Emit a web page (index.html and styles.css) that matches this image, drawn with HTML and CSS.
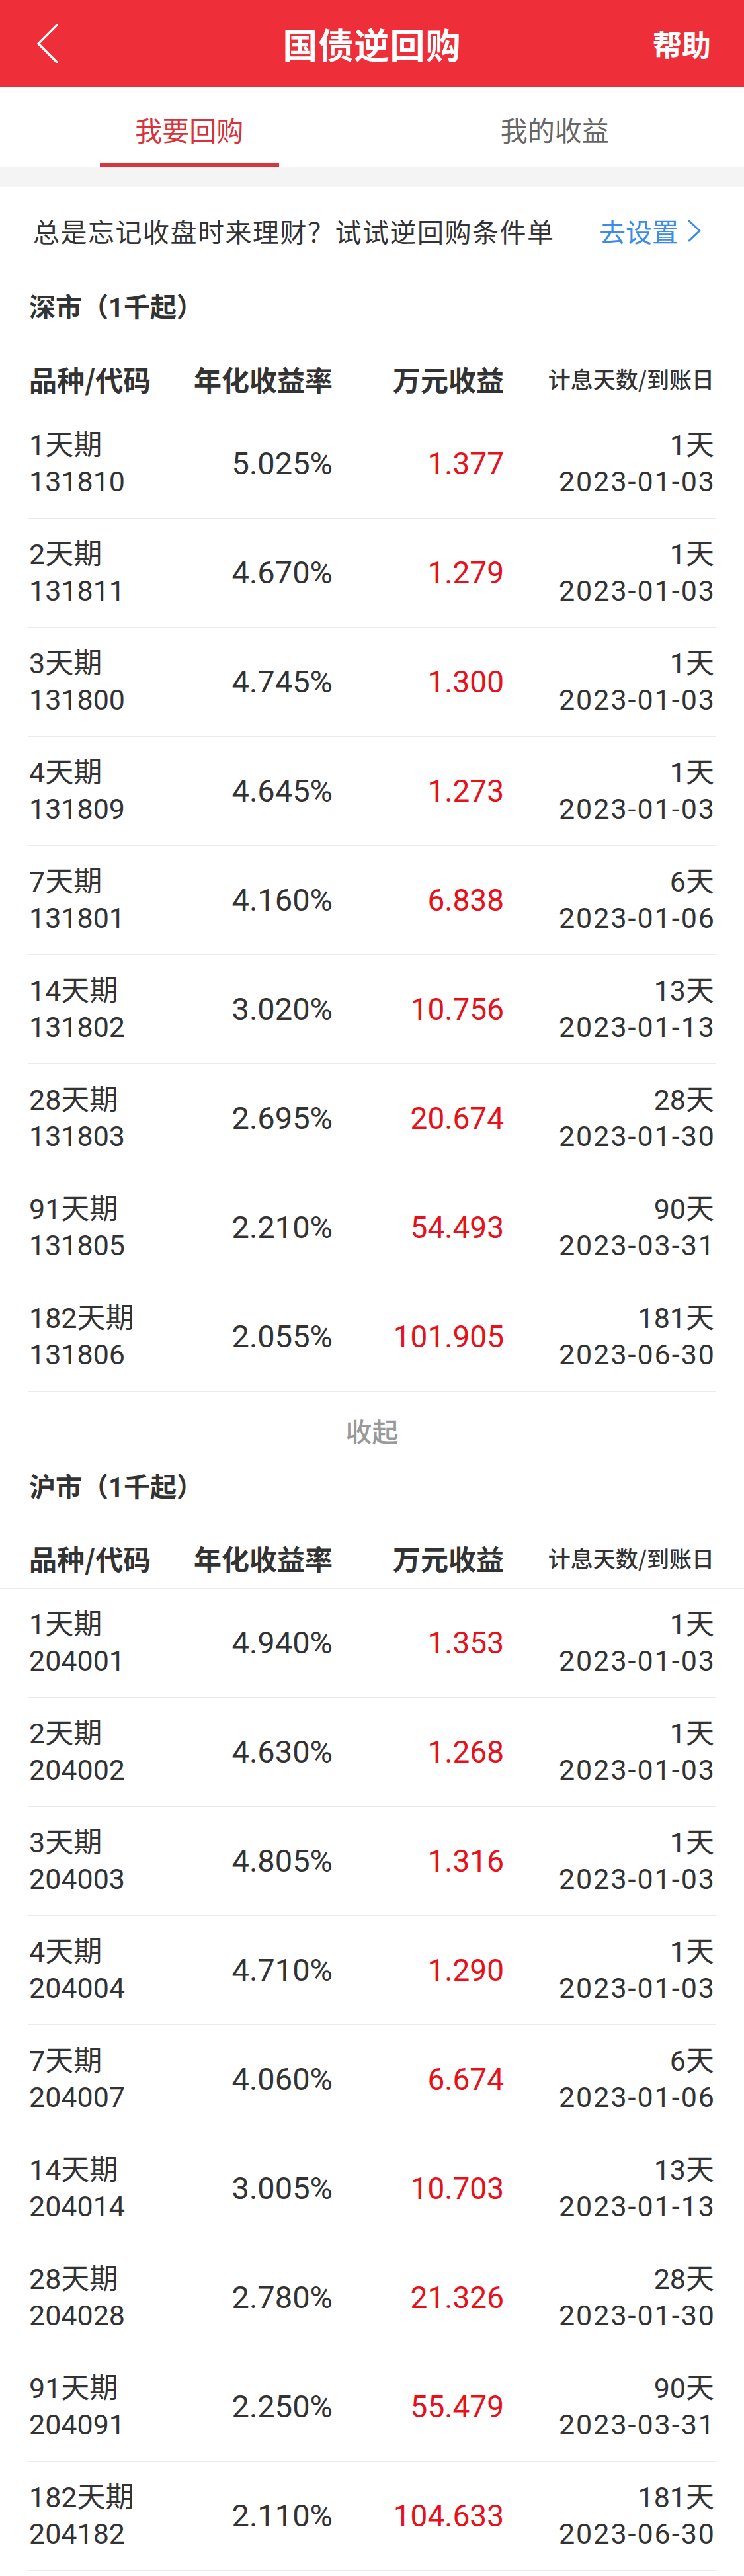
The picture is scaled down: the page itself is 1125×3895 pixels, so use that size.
FILE: index.html
```html
<!DOCTYPE html>
<html lang="zh-CN">
<head>
<meta charset="utf-8">
<title>国债逆回购</title>
<link rel="stylesheet" href="styles.css">
</head>
<body>
<header class="topbar">
  <div class="topbar-left">
    <svg class="back" width="34" height="60" viewBox="0 0 34 60"><polyline points="31,2 3,30 31,58" fill="none" stroke="#fff" stroke-width="3.5" stroke-linecap="round" stroke-linejoin="round"/></svg>
  </div>
  <div class="topbar-title">国债逆回购</div>
  <div class="topbar-right">帮助</div>
</header>

<nav class="tabs">
  <div class="tab active"><span>我要回购</span><i class="tab-line"></i></div>
  <div class="tab"><span>我的收益</span></div>
</nav>
<div class="gap"></div>

<div class="banner">
  <span class="banner-text">总是忘记收盘时来理财？试试逆回购条件单</span>
  <span class="banner-link">去设置<svg class="chev" width="24" height="36" viewBox="0 0 24 36"><polyline points="4,3 20,18 4,33" fill="none" stroke="#3c8ce7" stroke-width="3" stroke-linecap="round" stroke-linejoin="round"/></svg></span>
</div>

<section>
  <h2 class="market">深市（1千起）</h2>
  <div class="thead">
    <div>品种/代码</div><div class="r">年化收益率</div><div class="r">万元收益</div><div class="r small">计息天数/到账日</div>
  </div>
  <div class="row"><div class="c1"><b>1天期</b><i>131810</i></div><div class="rate">5.025%</div><div class="earn">1.377</div><div class="c4"><b>1天</b><i>2023-01-03</i></div></div>
  <div class="row"><div class="c1"><b>2天期</b><i>131811</i></div><div class="rate">4.670%</div><div class="earn">1.279</div><div class="c4"><b>1天</b><i>2023-01-03</i></div></div>
  <div class="row"><div class="c1"><b>3天期</b><i>131800</i></div><div class="rate">4.745%</div><div class="earn">1.300</div><div class="c4"><b>1天</b><i>2023-01-03</i></div></div>
  <div class="row"><div class="c1"><b>4天期</b><i>131809</i></div><div class="rate">4.645%</div><div class="earn">1.273</div><div class="c4"><b>1天</b><i>2023-01-03</i></div></div>
  <div class="row"><div class="c1"><b>7天期</b><i>131801</i></div><div class="rate">4.160%</div><div class="earn">6.838</div><div class="c4"><b>6天</b><i>2023-01-06</i></div></div>
  <div class="row"><div class="c1"><b>14天期</b><i>131802</i></div><div class="rate">3.020%</div><div class="earn">10.756</div><div class="c4"><b>13天</b><i>2023-01-13</i></div></div>
  <div class="row"><div class="c1"><b>28天期</b><i>131803</i></div><div class="rate">2.695%</div><div class="earn">20.674</div><div class="c4"><b>28天</b><i>2023-01-30</i></div></div>
  <div class="row"><div class="c1"><b>91天期</b><i>131805</i></div><div class="rate">2.210%</div><div class="earn">54.493</div><div class="c4"><b>90天</b><i>2023-03-31</i></div></div>
  <div class="row"><div class="c1"><b>182天期</b><i>131806</i></div><div class="rate">2.055%</div><div class="earn">101.905</div><div class="c4"><b>181天</b><i>2023-06-30</i></div></div>
  <div class="fold">收起</div>
</section>

<section>
  <h2 class="market market-sh">沪市（1千起）</h2>
  <div class="thead">
    <div>品种/代码</div><div class="r">年化收益率</div><div class="r">万元收益</div><div class="r small">计息天数/到账日</div>
  </div>
  <div class="row"><div class="c1"><b>1天期</b><i>204001</i></div><div class="rate">4.940%</div><div class="earn">1.353</div><div class="c4"><b>1天</b><i>2023-01-03</i></div></div>
  <div class="row"><div class="c1"><b>2天期</b><i>204002</i></div><div class="rate">4.630%</div><div class="earn">1.268</div><div class="c4"><b>1天</b><i>2023-01-03</i></div></div>
  <div class="row"><div class="c1"><b>3天期</b><i>204003</i></div><div class="rate">4.805%</div><div class="earn">1.316</div><div class="c4"><b>1天</b><i>2023-01-03</i></div></div>
  <div class="row"><div class="c1"><b>4天期</b><i>204004</i></div><div class="rate">4.710%</div><div class="earn">1.290</div><div class="c4"><b>1天</b><i>2023-01-03</i></div></div>
  <div class="row"><div class="c1"><b>7天期</b><i>204007</i></div><div class="rate">4.060%</div><div class="earn">6.674</div><div class="c4"><b>6天</b><i>2023-01-06</i></div></div>
  <div class="row"><div class="c1"><b>14天期</b><i>204014</i></div><div class="rate">3.005%</div><div class="earn">10.703</div><div class="c4"><b>13天</b><i>2023-01-13</i></div></div>
  <div class="row"><div class="c1"><b>28天期</b><i>204028</i></div><div class="rate">2.780%</div><div class="earn">21.326</div><div class="c4"><b>28天</b><i>2023-01-30</i></div></div>
  <div class="row"><div class="c1"><b>91天期</b><i>204091</i></div><div class="rate">2.250%</div><div class="earn">55.479</div><div class="c4"><b>90天</b><i>2023-03-31</i></div></div>
  <div class="row"><div class="c1"><b>182天期</b><i>204182</i></div><div class="rate">2.110%</div><div class="earn">104.633</div><div class="c4"><b>181天</b><i>2023-06-30</i></div></div>
</section>
<div class="bottom"></div>
</body>
</html>
```

FILE: styles.css
```css
* { box-sizing: border-box; }
html, body { margin: 0; padding: 0; background: #fff; }
body {
  width: 1125px;
  font-family: "Noto Sans CJK SC", "Noto Sans", sans-serif;
  color: #333;
}

.topbar {
  height: 132px;
  background: #ee2f39;
  display: grid;
  grid-template-columns: 1fr auto 1fr;
  align-items: center;
  color: #fff;
}
.topbar-left { padding-left: 55px; display: flex; align-items: center; }
.back { display: block; }
.topbar-title {
  font-size: 53px;
  font-weight: 700;
  line-height: 60px;
  letter-spacing: 1px;
}
.topbar-right {
  justify-self: end;
  padding-right: 50px;
  font-size: 44px;
  font-weight: 700;
  line-height: 60px;
}

.tabs {
  height: 121px;
  display: flex;
  padding: 0 10px;
}
.tab {
  flex: 1;
  position: relative;
  text-align: center;
  padding-top: 35px;
  font-size: 41px;
  line-height: 56px;
  color: #666;
}
.tab.active { color: #d8323a; }
.tab-line {
  position: absolute;
  left: 141px;
  bottom: 0;
  width: 271px;
  height: 6px;
  background: #d8343b;
}
.gap { height: 30px; background: #f4f4f4; }

.banner {
  height: 155px;
  padding: 38px 63px 0 50px;
  display: flex;
  justify-content: space-between;
  align-items: flex-start;
  font-size: 40px;
  line-height: 56px;
}
.banner-text { color: #333; letter-spacing: 1.5px; }
.banner-link { color: #3c8ce7; display: flex; align-items: center; gap: 12px; }
.chev { display: block; }

.market {
  margin: 0;
  padding: 0 44px 33px;
  font-family: Roboto, "Noto Sans CJK SC", sans-serif;
  font-size: 40px;
  font-weight: 700;
  line-height: 56px;
  height: 89px;
  color: #333;
}
.market-sh { height: 88px; }

.thead {
  height: 92px;
  border-top: 1px solid #ebebeb;
  border-bottom: 1px solid #ebebeb;
  display: grid;
  grid-template-columns: 246px 213px 259px 318px;
  padding: 0 45px 0 44px;
  align-items: center;
  font-size: 42px;
  font-weight: 700;
  color: #333;
  line-height: 56px;
}
.thead .r { text-align: right; }
.thead .small { font-size: 34px; font-weight: 500; }

.row {
  height: 165px;
  margin: 0 42px 0 43px;
  padding: 0 3px 0 1px;
  border-bottom: 1px solid #ececec;
  display: grid;
  grid-template-columns: 246px 213px 259px 318px;
  align-items: center;
  font-family: Roboto, "Noto Sans CJK SC", sans-serif;
}
.row b, .row i { display: block; font-style: normal; font-weight: 400; }
.c1, .c4 { font-size: 43px; line-height: 55px; }
.c4 { text-align: right; }
.c4 i { letter-spacing: 2px; margin-right: -2px; }
.rate, .earn { font-size: 47px; line-height: 56px; text-align: right; }
.earn { font-size: 46px; color: #e8101a; }

.fold {
  height: 118px;
  display: flex;
  align-items: center;
  justify-content: center;
  font-size: 40px;
  color: #999;
  font-weight: 500;
}
.bottom { height: 9px; }
```
